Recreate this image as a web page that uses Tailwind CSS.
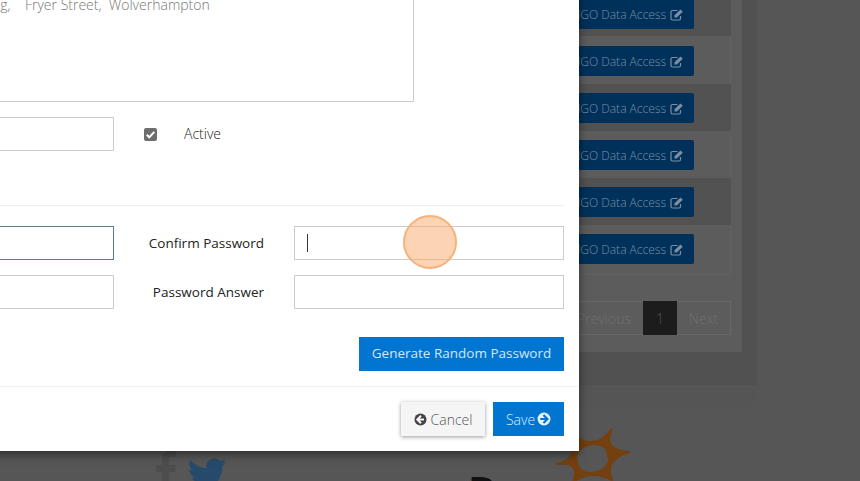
<!DOCTYPE html>
<html lang="en">
<head>
<meta charset="UTF-8" />
<title>User details</title>
<script src="https://cdn.jsdelivr.net/npm/@tailwindcss/browser@4"></script>
</head>
<body class="bg-[#565656] font-['Open_Sans',sans-serif] text-[14px]">
  <div class="relative w-[860px] h-[481px] overflow-hidden">

    <!-- Page behind the modal (dimmed) -->
    <div class="w-[757px] bg-[#515151]">
      <div class="h-[352px] w-[742px] bg-[#5c5c5c]">
        <div class="w-[731px]">
          <!-- rows -->
          <div class="flex h-[36px] justify-end bg-[#525252] pr-[37px]"><div class="flex h-[29px] w-[200px] items-center justify-end gap-1 rounded-b-[2px] bg-[#00315a] pr-[11px] text-[12px] text-[#7a8fa3] font-light"><span>MGO Data Access</span><svg width="13" height="12" viewBox="0 0 13 12"><path d="M7.500 1.500H2.500a1.500 1.500 0 0 0-1.500 1.500v6.500a1.500 1.500 0 0 0 1.500 1.500h6.500a1.500 1.500 0 0 0 1.500-1.500V7" fill="none" stroke="currentColor" stroke-width="1.200"/><path d="M4.500 8.500V6.300L10.500.5 12.800 2.700 6.800 8.500z" fill="currentColor"/></svg></div></div>
          <div class="flex h-[48px] items-center justify-end border-r border-[#616161] bg-[#5c5c5c] pt-[2px] pr-[36px]"><div class="flex h-[30px] w-[200px] items-center justify-end gap-1 rounded-[2px] bg-[#00315a] pt-[1px] pr-[11px] text-[12px] text-[#7a8fa3] font-light"><span>MGO Data Access</span><svg width="13" height="12" viewBox="0 0 13 12"><path d="M7.500 1.500H2.500a1.500 1.500 0 0 0-1.500 1.500v6.500a1.500 1.500 0 0 0 1.500 1.500h6.500a1.500 1.500 0 0 0 1.500-1.500V7" fill="none" stroke="currentColor" stroke-width="1.200"/><path d="M4.500 8.500V6.300L10.500.5 12.800 2.700 6.800 8.500z" fill="currentColor"/></svg></div></div>
          <div class="flex h-[47px] items-center justify-end bg-[#525252] pt-[1px] pr-[37px]"><div class="flex h-[30px] w-[200px] items-center justify-end gap-1 rounded-[2px] bg-[#00315a] pt-[1px] pr-[11px] text-[12px] text-[#7a8fa3] font-light"><span>MGO Data Access</span><svg width="13" height="12" viewBox="0 0 13 12"><path d="M7.500 1.500H2.500a1.500 1.500 0 0 0-1.500 1.500v6.500a1.500 1.500 0 0 0 1.500 1.500h6.500a1.500 1.500 0 0 0 1.500-1.500V7" fill="none" stroke="currentColor" stroke-width="1.200"/><path d="M4.500 8.500V6.300L10.500.5 12.800 2.700 6.800 8.500z" fill="currentColor"/></svg></div></div>
          <div class="flex h-[47px] items-center justify-end border-r border-[#616161] bg-[#5c5c5c] pt-[1px] pr-[36px]"><div class="flex h-[30px] w-[200px] items-center justify-end gap-1 rounded-[2px] bg-[#00315a] pt-[1px] pr-[11px] text-[12px] text-[#7a8fa3] font-light"><span>MGO Data Access</span><svg width="13" height="12" viewBox="0 0 13 12"><path d="M7.500 1.500H2.500a1.500 1.500 0 0 0-1.500 1.500v6.500a1.500 1.500 0 0 0 1.500 1.500h6.500a1.500 1.500 0 0 0 1.500-1.500V7" fill="none" stroke="currentColor" stroke-width="1.200"/><path d="M4.500 8.500V6.300L10.500.5 12.800 2.700 6.800 8.500z" fill="currentColor"/></svg></div></div>
          <div class="flex h-[47px] items-center justify-end bg-[#525252] pt-[1px] pr-[37px]"><div class="flex h-[30px] w-[200px] items-center justify-end gap-1 rounded-[2px] bg-[#00315a] pt-[1px] pr-[11px] text-[12px] text-[#7a8fa3] font-light"><span>MGO Data Access</span><svg width="13" height="12" viewBox="0 0 13 12"><path d="M7.500 1.500H2.500a1.500 1.500 0 0 0-1.500 1.500v6.500a1.500 1.500 0 0 0 1.500 1.500h6.500a1.500 1.500 0 0 0 1.500-1.500V7" fill="none" stroke="currentColor" stroke-width="1.200"/><path d="M4.500 8.500V6.300L10.500.5 12.800 2.700 6.800 8.500z" fill="currentColor"/></svg></div></div>
          <div class="flex h-[50px] items-start justify-end border-r border-b border-[#616161] bg-[#5c5c5c] pt-[9px] pr-[36px]"><div class="flex h-[30px] w-[200px] items-center justify-end gap-1 rounded-[2px] bg-[#00315a] pt-[1px] pr-[11px] text-[12px] text-[#7a8fa3] font-light"><span>MGO Data Access</span><svg width="13" height="12" viewBox="0 0 13 12"><path d="M7.500 1.500H2.500a1.500 1.500 0 0 0-1.500 1.500v6.500a1.500 1.500 0 0 0 1.500 1.500h6.500a1.500 1.500 0 0 0 1.500-1.500V7" fill="none" stroke="currentColor" stroke-width="1.200"/><path d="M4.500 8.500V6.300L10.500.5 12.800 2.700 6.800 8.500z" fill="currentColor"/></svg></div></div>
          <!-- pagination -->
          <div class="mt-[26px] flex h-[34px] justify-end text-[#6f6f6f] font-light">
            <div class="flex w-[100px] items-center justify-end border border-[#686868] border-r-0 pr-[12px]">Previous</div>
            <div class="flex w-[34px] items-center justify-center bg-[#1c1c1c] text-[#555]">1</div>
            <div class="flex w-[54px] items-center justify-center border border-[#686868] border-l-0">Next</div>
          </div>
        </div>
      </div>
      <div class="h-[34px]"></div>
      <div class="h-[20px] border-t border-[#5a5a5a] bg-[#555555]"></div>
    </div>

    <!-- Footer social icons and logo, partly under the modal -->
    <div class="absolute left-[153px] top-[446px] flex items-start gap-[7px]">
      <svg width="26" height="44" viewBox="0 0 26 44"><path d="M9 44V26H3v-7h6v-6c0-6 4-9 9-9h5v7h-4c-2 0-3 1-3 3v5h7l-1 7h-6v18z" fill="#4d4d4d"/></svg>
      <svg class="mt-[6px]" width="42" height="42" viewBox="0 0 24 24"><path d="M23 5.900a9 9 0 0 1-2.600.700 4.500 4.500 0 0 0 2-2.500 9 9 0 0 1-2.900 1.100 4.500 4.500 0 0 0-7.700 4.100A12.800 12.800 0 0 1 2.500 4.600a4.500 4.500 0 0 0 1.400 6 4.500 4.500 0 0 1-2-.6c0 2.200 1.500 4 3.600 4.500a4.500 4.500 0 0 1-2 .1 4.500 4.500 0 0 0 4.200 3.100A9 9 0 0 1 1 19.600 12.800 12.800 0 0 0 20.700 8.200 9 9 0 0 0 23 5.900z" fill="#264a6b"/></svg>
    </div>
    <svg class="absolute left-[540px] top-[420px]" width="100" height="61" viewBox="0 0 100 61">
      <path fill-rule="evenodd" fill="#74400f" stroke="#74400f" stroke-width="2" stroke-linejoin="round" d="M30 12Q53 33.500 72 9 61.500 29.500 89 32 63.500 40 72 60 51.500 49 33 62 41.500 41 16 44 41 40 30 12ZM37.500 42.500A16 11.500 -15 1 1 67.500 34.500 16 11.500 -15 1 1 37.500 42.500Z"/>
    </svg>
    <span class="absolute left-[468px] top-[466px] text-[40px] font-bold leading-[48px] text-[#111]">D</span>

    <!-- Modal -->
    <div class="absolute bottom-[30px] left-[-321px] w-[900px] bg-white shadow-[0_3px_9px_rgba(0,0,0,0.5)]">
      <div class="px-[15px] pt-[15px]">
        <div class="ml-[150px] mr-[150px] h-[130px] border border-[#ccc] pl-[112px] pt-[22px] leading-[20px] text-[#777] font-light whitespace-pre">Building,    Fryer Street,  Wolverhampton</div>

        <div class="mt-[15px] flex h-[34px] items-center">
          <div class="ml-[150px] h-[34px] w-[270px] border border-[#ccc]"></div>
          <svg class="ml-[30px]" width="13" height="13" viewBox="0 0 13 13"><rect width="13" height="13" rx="2" fill="#6e6e6e"/><path d="M2.800 6.700 5.300 9.300 10.300 3.800" fill="none" stroke="#fff" stroke-width="2"/></svg>
          <span class="ml-[27px] pb-[2px] text-[#222] font-light">Active</span>
        </div>

        <div class="mt-[54px] border-t border-[#eee]"></div>

        <div class="mt-[20px] flex h-[34px] items-center">
          <div class="ml-[150px] h-[34px] w-[270px] border border-[#5a7d8c]"></div>
          <label class="w-[150px] text-right text-[13.5px] text-[#222]">Confirm Password</label>
          <div class="ml-[30px] flex h-[34px] w-[270px] items-center border border-[#ccc] pl-[12px]"><div class="h-[18px] w-px bg-[#333]"></div></div>
        </div>
        <div class="mt-[15px] flex h-[34px] items-center">
          <div class="ml-[150px] h-[34px] w-[270px] border border-[#ccc]"></div>
          <label class="w-[150px] text-right text-[13.5px] text-[#222]">Password Answer</label>
          <div class="ml-[30px] h-[34px] w-[270px] border border-[#ccc]"></div>
        </div>

        <div class="mt-[28px] flex justify-end pb-[15px]">
          <button class="h-[34px] w-[205px] bg-[#0275d0] pb-[2px] text-[13.5px] text-[#cfe8fb]">Generate Random Password</button>
        </div>
      </div>

      <div class="flex justify-end gap-2 border-t border-[#f2f2f2] px-[15px] pb-[15px] pt-[15px]">
        <button class="flex h-[34px] w-[84px] items-center justify-center gap-1 bg-[#f5f5f5] text-[#555] font-light shadow-[0_1px_4px_rgba(0,0,0,0.4)]">
          <svg width="13" height="13" viewBox="0 0 13 13"><circle cx="6.500" cy="6.500" r="6" fill="#444"/><path d="M7 2.800 3.300 6.500 7 10.200M3.500 6.500h6.500" fill="none" stroke="#f5f5f5" stroke-width="2"/></svg>
          Cancel
        </button>
        <button class="flex h-[34px] w-[71px] items-center justify-center gap-[2px] bg-[#0275d0] text-[#dceefc] font-light">
          Save
          <svg width="14" height="14" viewBox="0 0 13 13"><circle cx="6.500" cy="6.500" r="6" fill="#e4f2fd"/><path d="M6 2.800 9.700 6.500 6 10.200M9.500 6.500H3" fill="none" stroke="#0275d0" stroke-width="2"/></svg>
        </button>
      </div>
    </div>

    <!-- Click highlight from the recording -->
    <div class="absolute left-[403px] top-[215px] size-[54px] rounded-full border-2 border-[#f5b27c] bg-[#f9a868]/50"></div>
  </div>
</body>
</html>
